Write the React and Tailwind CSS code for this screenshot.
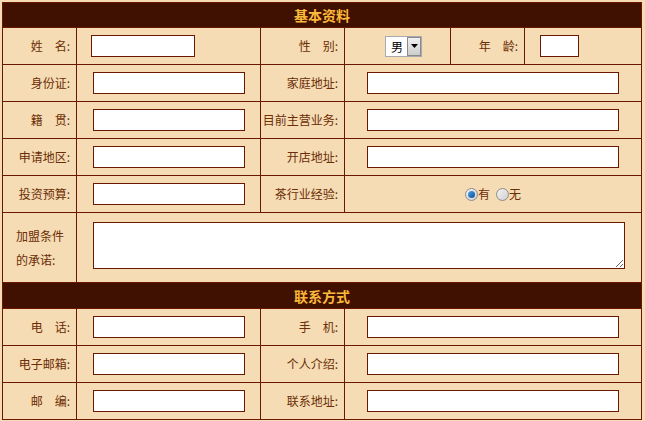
import React from "react";

const labelCls =
  "flex items-center justify-end pr-[6px] bg-[#F5DCB4] text-[12px] leading-[14px] text-[#6B2D05] whitespace-nowrap";
const cellCls = "flex items-center bg-[#F5DCB4]";
const inputCls =
  "h-[22px] border border-[#6A1800] bg-white outline-none px-1 text-[12px]";

function Label({ children }) {
  return <div className={labelCls}>{children}</div>;
}

function Header({ title, tall }) {
  return (
    <div
      className={`col-span-4 flex items-center justify-center bg-[#401000] text-[14px] font-bold leading-[16px] text-[#FBB93B] ${
        tall ? "h-[25px]" : "h-[24px]"
      }`}
    >
      {title}
    </div>
  );
}

function Radio({ checked }) {
  return (
    <span className="flex h-[13px] w-[13px] items-center justify-center rounded-full border border-[#8c8c8c] bg-gradient-to-br from-[#f4f4f4] to-[#cfcfcf]">
      {checked && (
        <span className="h-[7px] w-[7px] rounded-full bg-gradient-to-br from-[#4fa3e6] to-[#0b4f96]" />
      )}
    </span>
  );
}

export default function App() {
  return (
    <div className="min-h-screen bg-[#F5DCB4] pl-[2px] pt-[2px] font-['Noto_Sans_CJK_SC',sans-serif]">
      <div className="grid w-[640px] grid-cols-[73px_183px_83px_296px] gap-px border border-[#6A1800] bg-[#6A1800]">
        <Header title="基本资料" />

        {/* row: name / gender / age */}
        <Label>姓　名:</Label>
        <div className={`${cellCls} h-[36px] pl-[14px]`}>
          <input className={`${inputCls} w-[104px]`} />
        </div>
        <Label>性　别:</Label>
        <div className="grid grid-cols-[105px_73px_116px] gap-px">
          <div className={`${cellCls} pl-[40px]`}>
            <div className="flex h-[21px] w-[37px] border border-[#a7abb0] bg-white">
              <span className="flex-1 overflow-hidden pl-[5px] text-[12px] leading-[19px] text-black">
                男
              </span>
              <span className="flex w-[14px] items-center justify-center border border-[#8a8a8a] bg-gradient-to-b from-[#f0f0f0] to-[#cdcdcd]">
                <svg width="7" height="4" viewBox="0 0 7 4">
                  <path d="M0 0h7L3.5 4z" fill="#000" />
                </svg>
              </span>
            </div>
          </div>
          <Label>年　龄:</Label>
          <div className={`${cellCls} pl-[15px]`}>
            <input className={`${inputCls} w-[39px]`} />
          </div>
        </div>

        <Label>身份证:</Label>
        <div className={`${cellCls} h-[36px] pl-[16px]`}>
          <input className={`${inputCls} w-[152px]`} />
        </div>
        <Label>家庭地址:</Label>
        <div className={`${cellCls} pl-[22px]`}>
          <input className={`${inputCls} w-[252px]`} />
        </div>

        <Label>籍　贯:</Label>
        <div className={`${cellCls} h-[36px] pl-[16px]`}>
          <input className={`${inputCls} w-[152px]`} />
        </div>
        <Label>目前主营业务:</Label>
        <div className={`${cellCls} pl-[22px]`}>
          <input className={`${inputCls} w-[252px]`} />
        </div>

        <Label>申请地区:</Label>
        <div className={`${cellCls} h-[36px] pl-[16px]`}>
          <input className={`${inputCls} w-[152px]`} />
        </div>
        <Label>开店地址:</Label>
        <div className={`${cellCls} pl-[22px]`}>
          <input className={`${inputCls} w-[252px]`} />
        </div>

        <Label>投资预算:</Label>
        <div className={`${cellCls} h-[36px] pl-[16px]`}>
          <input className={`${inputCls} w-[152px]`} />
        </div>
        <Label>茶行业经验:</Label>
        <div className={`${cellCls} justify-center text-[12px] leading-[14px] text-[#6B2D05]`}>
          <Radio checked />
          <span>有</span>
          <span className="ml-[6px]">
            <Radio />
          </span>
          <span>无</span>
        </div>

        {/* commitment */}
        <div className="flex items-center bg-[#F5DCB4] pl-[13px] text-[12px] leading-[24px] text-[#6B2D05]">
          <div>
            加盟条件
            <br />
            的承诺:
          </div>
        </div>
        <div className="col-span-3 h-[69px] bg-[#F5DCB4] pl-[16px] pt-[9px]">
          <textarea className="block h-[47px] w-[532px] border border-[#6A1800] bg-white outline-none" />
        </div>

        <Header title="联系方式" tall />

        <Label>电　话:</Label>
        <div className={`${cellCls} h-[36px] pl-[16px]`}>
          <input className={`${inputCls} w-[152px]`} />
        </div>
        <Label>手　机:</Label>
        <div className={`${cellCls} pl-[22px]`}>
          <input className={`${inputCls} w-[252px]`} />
        </div>

        <Label>电子邮箱:</Label>
        <div className={`${cellCls} h-[36px] pl-[16px]`}>
          <input className={`${inputCls} w-[152px]`} />
        </div>
        <Label>个人介绍:</Label>
        <div className={`${cellCls} pl-[22px]`}>
          <input className={`${inputCls} w-[252px]`} />
        </div>

        <Label>邮　编:</Label>
        <div className={`${cellCls} h-[36px] pl-[16px]`}>
          <input className={`${inputCls} w-[152px]`} />
        </div>
        <Label>联系地址:</Label>
        <div className={`${cellCls} pl-[22px]`}>
          <input className={`${inputCls} w-[252px]`} />
        </div>
      </div>
    </div>
  );
}
